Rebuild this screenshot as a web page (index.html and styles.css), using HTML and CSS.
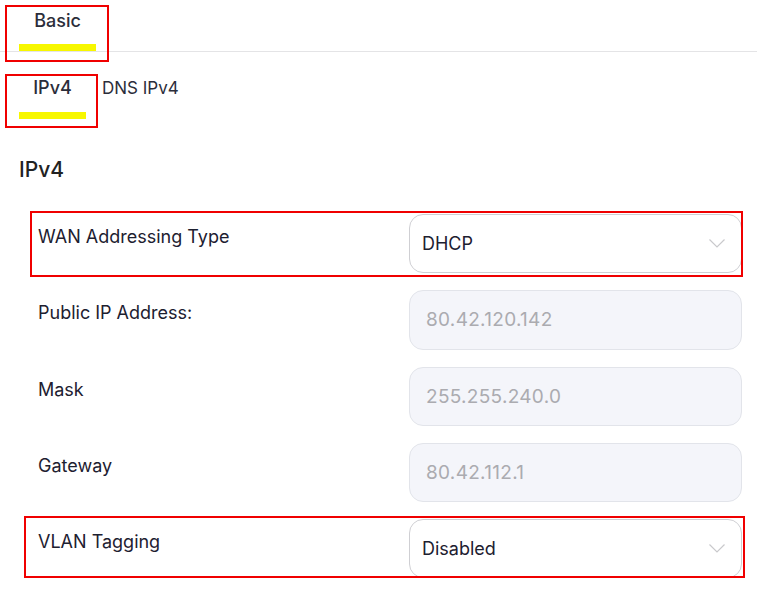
FILE: index.html
```html
<!DOCTYPE html>
<html lang="en">
<head>
    <meta charset="UTF-8">
    <meta name="viewport" content="width=device-width, initial-scale=1.0">
    <title>WAN Settings</title>
    <link rel="stylesheet" href="styles.css">
</head>
<body>

    <!-- Main tabs -->
    <div class="tabbar">
        <div class="tab active flag flag-basic">
            <span class="tab-label">Basic</span>
            <span class="tab-bar"></span>
        </div>
    </div>

    <!-- Sub tabs -->
    <div class="subtabs">
        <div class="tab active flag flag-ipv4">
            <span class="tab-label">IPv4</span>
            <span class="tab-bar"></span>
        </div>
        <div class="tab">
            <span class="tab-label">DNS IPv4</span>
        </div>
    </div>

    <h2 class="section-title">IPv4</h2>

    <div class="form">
        <div class="row flag flag-wan">
            <div class="label">WAN Addressing Type</div>
            <div class="select">
                <span>DHCP</span>
                <svg class="chevron" width="16" height="9" viewBox="0 0 16 9">
                    <path d="M0.5 0.5 L8 8 L15.5 0.5" fill="none" stroke="#c9c9cc" stroke-width="1.2"/>
                </svg>
            </div>
        </div>

        <div class="row">
            <div class="label">Public IP Address:</div>
            <div class="field">80.42.120.142</div>
        </div>

        <div class="row">
            <div class="label">Mask</div>
            <div class="field">255.255.240.0</div>
        </div>

        <div class="row">
            <div class="label">Gateway</div>
            <div class="field">80.42.112.1</div>
        </div>

        <div class="row flag flag-vlan">
            <div class="label">VLAN Tagging</div>
            <div class="select">
                <span>Disabled</span>
                <svg class="chevron" width="16" height="9" viewBox="0 0 16 9">
                    <path d="M0.5 0.5 L8 8 L15.5 0.5" fill="none" stroke="#c9c9cc" stroke-width="1.2"/>
                </svg>
            </div>
        </div>
    </div>

</body>
</html>
```

FILE: styles.css
```css
body {
    font-family: Inter, "Noto Sans", sans-serif;
    color: #1d2030;
    background-color: #fff;
    margin: 0;
}

/* red highlight frames drawn over the marked items */
.flag {
    position: relative;
}
.flag::after {
    content: "";
    position: absolute;
    border: 2px solid #f00000;
    pointer-events: none;
}
.flag-basic::after { top: -6px; left: -14px; right: -13px; bottom: -11px; }
.flag-ipv4::after { top: -4px; left: -14px; right: -12px; bottom: -9px; }
.flag-wan::after { top: -3px; left: -8px; right: -1px; bottom: -4px; }
.flag-vlan::after { top: -3px; left: -14px; right: -3px; bottom: 0; }

.tabbar {
    display: flex;
    padding: 11px 0 0 19px;
    border-bottom: 1px solid #e4e4e6;
}
.subtabs {
    display: flex;
    gap: 16px;
    padding: 26px 0 0 19px;
}
.tab {
    display: flex;
    flex-direction: column;
    align-items: center;
    font-size: 17px;
    line-height: 20px;
    color: #2b2d3a;
}
.tab.active .tab-label {
    font-size: 18px;
    font-weight: 500;
}
.tab-bar {
    align-self: stretch;
    height: 7px;
    margin-top: 13px;
    background-color: #f7f700;
}
.tabbar .tab {
    width: 77px;
}
.subtabs .tab.active {
    width: 67px;
}
.subtabs .tab-bar {
    margin-top: 14px;
}

.section-title {
    margin: 37px 0 0 19px;
    font-size: 21px;
    line-height: 28px;
    font-weight: 500;
    color: #222;
}

.form {
    display: flex;
    flex-direction: column;
    gap: 17px;
    margin: 30px 15px 0 38px;
}
.row {
    display: flex;
    height: 59.3px;
}
.label {
    flex: 1;
    margin-top: 13px;
    font-size: 18px;
    line-height: 20px;
}
.select,
.field {
    width: 333px;
    box-sizing: border-box;
    display: flex;
    align-items: center;
    border-radius: 14px;
    font-size: 18px;
}
.select {
    justify-content: space-between;
    padding: 0 16px 0 12px;
    border: 1px solid #cfcfd3;
    background-color: #fff;
    color: #1d2030;
}
.field {
    padding: 0 16px;
    border: 1px solid #e2e4ea;
    background-color: #f4f5fa;
    color: #ababb0;
    font-size: 19px;
    letter-spacing: 0.3px;
}
```
